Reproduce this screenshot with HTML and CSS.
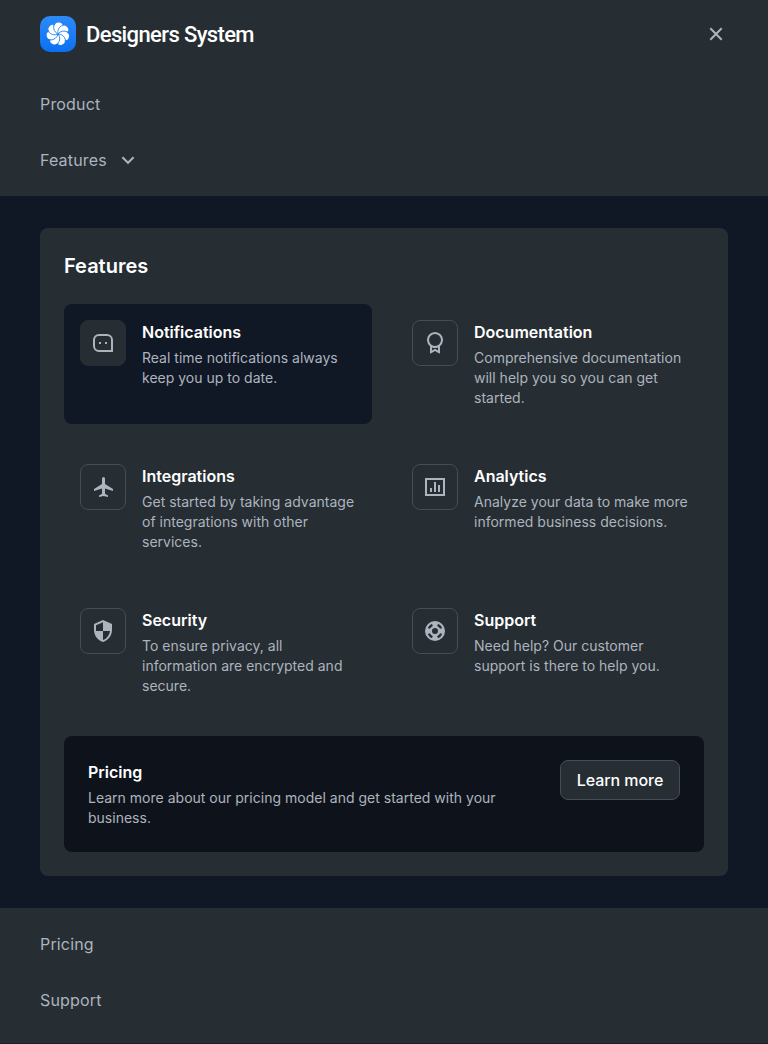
FILE: index.html
```html
<!DOCTYPE html>
<html lang="en">
<head>
<meta charset="utf-8">
<title>Designers System</title>
<link rel="stylesheet" href="styles.css">
</head>
<body>
<header class="top">
  <div class="bar">
    <a class="brand">
      <svg class="logo" viewBox="0 0 36 36">
        <defs>
          <linearGradient id="blue" x1="0" y1="0" x2="0" y2="1"><stop offset="0" stop-color="#2d8bf8"/><stop offset="1" stop-color="#0b6ff2"/></linearGradient>
          <circle id="lobe" cx="18.6" cy="10.6" r="4"/>
          <path id="gap" d="M18 18Q16.8 12.2 22.6 9"/>
        </defs>
        <rect width="36" height="36" rx="10" fill="url(#blue)"/>
        <g fill="#fff">
          <circle cx="18" cy="18" r="7.5"/>
          <use href="#lobe"/><use href="#lobe" transform="rotate(51.43 18 18)"/><use href="#lobe" transform="rotate(102.86 18 18)"/><use href="#lobe" transform="rotate(154.29 18 18)"/><use href="#lobe" transform="rotate(205.71 18 18)"/><use href="#lobe" transform="rotate(257.14 18 18)"/><use href="#lobe" transform="rotate(308.57 18 18)"/>
        </g>
        <g fill="none" stroke="#1c7df5" stroke-width=".8">
          <use href="#gap"/><use href="#gap" transform="rotate(51.43 18 18)"/><use href="#gap" transform="rotate(102.86 18 18)"/><use href="#gap" transform="rotate(154.29 18 18)"/><use href="#gap" transform="rotate(205.71 18 18)"/><use href="#gap" transform="rotate(257.14 18 18)"/><use href="#gap" transform="rotate(308.57 18 18)"/>
        </g>
      </svg>
      <span class="brand-name">Designers System</span>
    </a>
    <svg class="icon" viewBox="0 0 24 24"><path d="M6.3 6.3 17.7 17.7M17.7 6.3 6.3 17.7" fill="none" stroke="currentColor" stroke-width="2"/></svg>
  </div>
  <nav class="nav">
    <a class="nav-item">Product</a>
    <a class="nav-item">Features <svg class="chevron" viewBox="0 0 24 24"><path d="M6.4 9.2 12 14.8 17.6 9.2" fill="none" stroke="currentColor" stroke-width="2"/></svg></a>
  </nav>
</header>
<main class="stage">
  <section class="panel">
    <h2 class="heading">Features</h2>
    <div class="grid">
      <article class="card active">
        <div class="tile"><svg class="icon" viewBox="0 0 24 24"><path d="M21 20H8a5 5 0 0 1-5-5V9a5 5 0 0 1 5-5h8a5 5 0 0 1 5 5z" fill="none" stroke="currentColor" stroke-width="2"/><path d="M8 11h2v2H8zM14 11h2v2h-2z"/></svg></div>
        <div class="copy"><h3 class="title">Notifications</h3><p class="text">Real time notifications always keep you up to date.</p></div>
      </article>
      <article class="card">
        <div class="tile"><svg class="icon" viewBox="0 0 24 24"><path d="M17 15.245v6.872a.5.5 0 0 1-.757.429L12 20l-4.243 2.546a.5.5 0 0 1-.757-.43v-6.87a8 8 0 1 1 10 0zm-8 1.173v3.05l3-1.8 3 1.8v-3.05A7.978 7.978 0 0 1 12 17a7.978 7.978 0 0 1-3-.582zM12 15a6 6 0 1 0 0-12 6 6 0 0 0 0 12z"/></svg></div>
        <div class="copy"><h3 class="title">Documentation</h3><p class="text">Comprehensive documentation will help you so you can get started.</p></div>
      </article>
      <article class="card">
        <div class="tile"><svg class="icon" viewBox="0 0 24 24"><path d="M14 8.947L22 14v2l-8-2.526v5.36l3 1.666V22l-4.5-1L8 22v-1.5l3-1.667v-5.36L3 16v-2l8-5.053V3.5a1.5 1.5 0 0 1 3 0v5.447z"/></svg></div>
        <div class="copy"><h3 class="title">Integrations</h3><p class="text">Get started by taking advantage of integrations with other services.</p></div>
      </article>
      <article class="card">
        <div class="tile"><svg class="icon" viewBox="0 0 24 24"><path d="M2 3h20v18H2zm2 2v14h16V5zm3 8h2v4H7zm4-6h2v10h-2zm4 3h2v7h-2z" fill-rule="evenodd"/></svg></div>
        <div class="copy"><h3 class="title">Analytics</h3><p class="text">Analyze your data to make more informed business decisions.</p></div>
      </article>
      <article class="card">
        <div class="tile"><svg class="icon" viewBox="0 0 24 24"><path d="M12 1L3 5v6c0 5.55 3.84 10.74 9 12 5.16-1.26 9-6.45 9-12V5l-9-4zm0 10.99h7c-.53 4.12-3.28 7.79-7 8.94V12H5V6.3l7-3.11v8.8z"/></svg></div>
        <div class="copy"><h3 class="title">Security</h3><p class="text">To ensure privacy, all information are encrypted and secure.</p></div>
      </article>
      <article class="card">
        <div class="tile"><svg class="icon" viewBox="0 0 24 24">
          <mask id="buoy"><rect width="24" height="24" fill="#fff"/><circle cx="12" cy="12" r="3" fill="#000"/><g fill="none" stroke="#000" stroke-width="2.4"><path id="slot" d="M5.8 9.4A6.7 6.7 0 0 1 9.4 5.8"/><use href="#slot" transform="rotate(90 12 12)"/><use href="#slot" transform="rotate(180 12 12)"/><use href="#slot" transform="rotate(270 12 12)"/></g></mask>
          <circle cx="12" cy="12" r="10" mask="url(#buoy)"/></svg></div>
        <div class="copy"><h3 class="title">Support</h3><p class="text">Need help? Our customer support is there to help you.</p></div>
      </article>
    </div>
    <div class="pricing">
      <div class="copy"><h3 class="title">Pricing</h3><p class="text">Learn more about our pricing model and get started with your business.</p></div>
      <button class="button">Learn more</button>
    </div>
  </section>
</main>
<footer class="nav bottom">
  <a class="nav-item">Pricing</a>
  <a class="nav-item">Support</a>
</footer>
</body>
</html>
```
FILE: styles.css
```css
* { box-sizing: border-box; margin: 0; }
body { background: #262d33; color: #adb4be; font-family: Inter, "Liberation Sans", sans-serif; }
svg { display: block; flex: none; fill: currentColor; }
.top { height: 196px; }
.bar { display: flex; align-items: center; justify-content: space-between; padding: 16px 40px; }
.brand { display: flex; align-items: center; gap: 10px; }
.logo { width: 36px; height: 36px; }
.brand-name { font: 500 22px/34px Roboto, sans-serif; letter-spacing: -0.62px; color: #fff; padding-top: 2px; }
.icon, .chevron { width: 24px; height: 24px; }
.nav { display: flex; flex-direction: column; gap: 32px; padding: 24px 40px; }
.nav-item { display: flex; align-items: center; gap: 9px; font-size: 16px; line-height: 24px; letter-spacing: 0.16px; font-weight: 400; }
.stage { background: #101725; padding: 32px 40px; }
.panel { background: #262d33; border-radius: 8px; padding: 24px; }
.heading { font-size: 20px; line-height: 28px; font-weight: 600; color: #fff; margin-bottom: 24px; }
.grid { display: grid; grid-template-columns: 308px 308px; gap: 24px; }
.card { display: flex; gap: 16px; height: 120px; padding: 16px; border-radius: 8px; }
.active { background: #101725; }
.tile { display: flex; align-items: center; justify-content: center; flex: none; width: 46px; height: 46px; border: 1px solid #454e56; border-radius: 8px; }
.active .tile { background: #262d33; border-color: #262d33; }
.title { font-size: 16px; line-height: 24px; font-weight: 600; color: #fff; margin-bottom: 4px; }
.text { font-size: 14px; line-height: 20px; letter-spacing: 0.01px; }
.pricing { display: flex; align-items: flex-start; justify-content: space-between; margin-top: 24px; padding: 24px; border-radius: 8px; background: #0e131b; }
.pricing .copy { width: 420px; }
.button { width: 120px; height: 40px; padding: 0; border: 1px solid #454e56; border-radius: 8px; background: #262d33; color: #fff; font: 500 16px/24px Inter, sans-serif; letter-spacing: -0.05px; }
.bottom { height: 136px; border-bottom: 1px solid #1a2029; }
```
